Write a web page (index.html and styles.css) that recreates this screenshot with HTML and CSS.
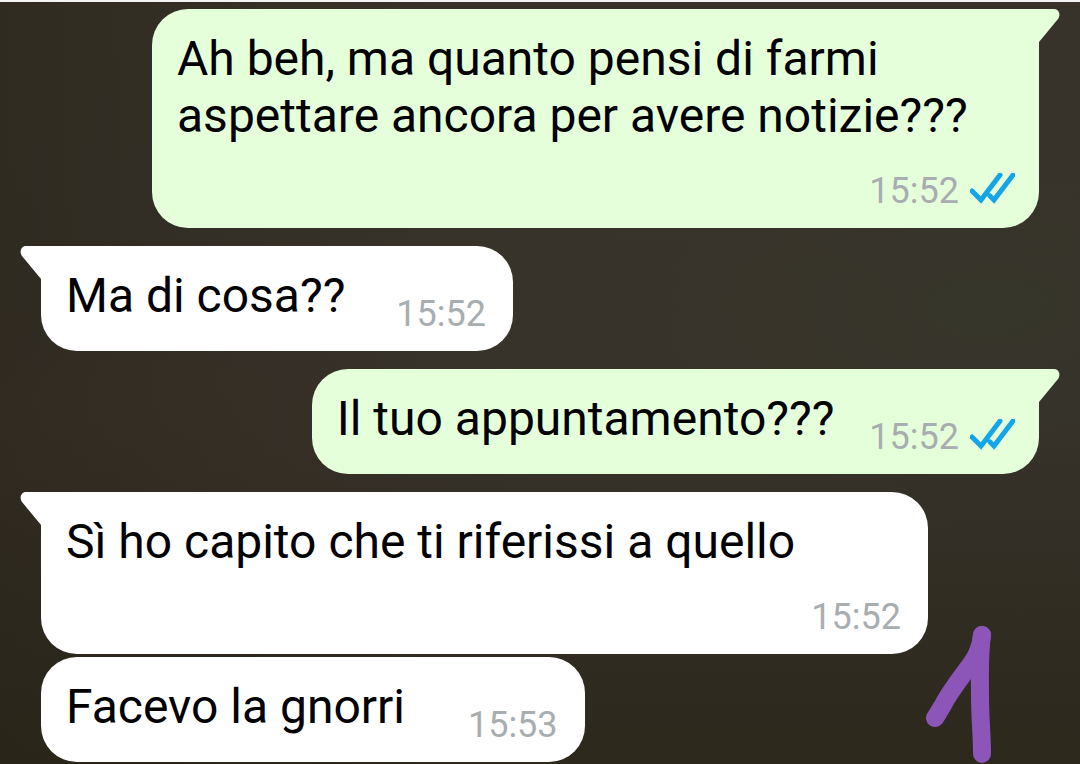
FILE: index.html
```html
<!DOCTYPE html>
<html lang="it">
<head>
  <meta charset="UTF-8">
  <meta name="viewport" content="width=device-width, initial-scale=1.0">
  <title>Chat</title>
  <link rel="stylesheet" href="styles.css">
</head>
<body>
  <main class="chat">
    <div class="message out tail">
      <p class="text">Ah beh, ma quanto pensi di farmi aspettare ancora per avere notizie???</p>
      <div class="meta">
        <time>15:52</time>
        <svg class="ticks" viewBox="0 0 45 36" aria-hidden="true">
          <path d="M2 18L11 27L30 2M20 23L24 27L43 2"/>
        </svg>
      </div>
    </div>

    <div class="message in tail">
      <p class="text">Ma di cosa??</p>
      <div class="meta"><time>15:52</time></div>
    </div>

    <div class="message out tail">
      <p class="text">Il tuo appuntamento???</p>
      <div class="meta">
        <time>15:52</time>
        <svg class="ticks" viewBox="0 0 45 36" aria-hidden="true">
          <path d="M2 18L11 27L30 2M20 23L24 27L43 2"/>
        </svg>
      </div>
    </div>

    <div class="message in tail">
      <p class="text">Sì ho capito che ti riferissi a quello</p>
      <div class="meta"><time>15:52</time></div>
    </div>

    <div class="message in">
      <p class="text">Facevo la gnorri&nbsp;</p>
      <div class="meta"><time>15:53</time></div>
    </div>

    <svg class="doodle" viewBox="0 0 68 138" aria-hidden="true">
      <path d="M57 9C56 19 52 30 46 38C34 54 24 67 18 79C14 85 13 88 10 92"/>
      <path d="M57 9C54 30 55 50 55 70C55 92 57 108 57 128"/>
      <path d="M55 20L49 38L54 42"/>
    </svg>
  </main>
</body>
</html>
```
FILE: styles.css
```css
* {
  box-sizing: border-box;
}
body {
  margin: 0;
  font-family: Roboto, "Liberation Sans", sans-serif;
  background-color: #302c20;
}
.chat {
  position: relative;
  display: flex;
  flex-direction: column;
  align-items: flex-start;
  min-height: 100vh;
  padding: 7px 41px 2px;
  border-top: 2px solid #f4f4f4;
  background-image:
    radial-gradient(ellipse at 92% 40%, rgba(54, 56, 42, 0.6), transparent 24%),
    radial-gradient(ellipse at 15% 58%, rgba(60, 44, 34, 0.3), transparent 26%),
    radial-gradient(ellipse at 65% 45%, rgba(58, 53, 42, 0.5), transparent 40%),
    linear-gradient(90deg, rgba(36, 32, 20, 0.4), transparent 40%),
    linear-gradient(#38332a, #36322a 55%, #2d281c);
}
.message {
  position: relative;
  display: flex;
  flex-wrap: wrap;
  justify-content: flex-end;
  align-items: flex-end;
  row-gap: 15px;
  max-width: calc(100% - 111px);
  border-radius: 36px;
  color: #000;
}
.message + .message {
  margin-top: 3px;
}
.message + .tail {
  margin-top: 18px;
}
.in {
  column-gap: 51px;
  padding: 21px 27px 16px 25px;
  background-color: #fff;
}
.out {
  align-self: flex-end;
  column-gap: 35px;
  padding: 21px 24px 16px 25px;
  background-color: #e5ffdb;
}
.in.tail {
  border-top-left-radius: 0;
}
.out.tail {
  border-top-right-radius: 0;
}
.tail::before {
  content: '';
  position: absolute;
  top: 0;
  width: 22px;
  height: 33px;
  background-color: inherit;
  clip-path: path('M0 0H16C21 0 23 6 20 10L1 33H0Z');
}
.out::before {
  right: -21px;
}
.in::before {
  left: -21px;
  transform: scaleX(-1);
}
.text {
  flex-grow: 1;
  margin: 0;
  padding-bottom: 11px;
  font-size: 48px;
  line-height: 57px;
}
.meta {
  display: flex;
  align-items: center;
  gap: 11px;
  color: #a8adaf;
  font-size: 36px;
  line-height: 42px;
}
.ticks {
  width: 45px;
  height: 36px;
  fill: none;
  stroke: #14a5e8;
  stroke-width: 5;
  stroke-linecap: round;
}
.doodle {
  position: absolute;
  right: 87px;
  bottom: 0;
  width: 68px;
  height: 138px;
  fill: none;
  stroke: #8c55b8;
  stroke-width: 18;
  stroke-linecap: round;
  stroke-linejoin: round;
}
```
